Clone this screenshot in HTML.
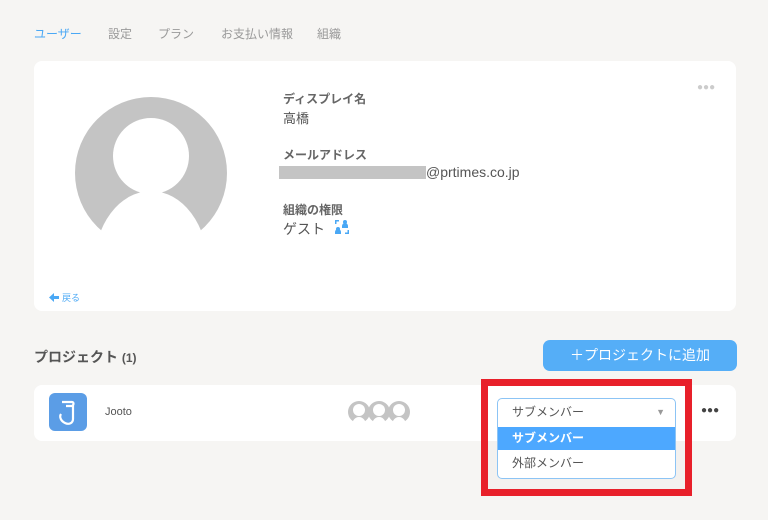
<!DOCTYPE html>
<html><head><meta charset="utf-8"><style>
*{margin:0;padding:0;box-sizing:border-box}
body{width:768px;height:520px;background:#f6f5f3;font-family:"Liberation Sans","Noto Sans CJK JP",sans-serif;position:relative;overflow:hidden;color:#555}
.a{position:absolute;white-space:nowrap}
.tab{top:25px;font-size:12px;color:#999}
.card{position:absolute;background:#fff;border-radius:8px}
.lbl{font-size:12px;font-weight:bold;color:#666}
.val{font-size:13px;color:#555}
</style></head><body>
<div class="a tab" style="left:34px;color:#4aa8f5">ユーザー</div>
<div class="a tab" style="left:108px">設定</div>
<div class="a tab" style="left:158px">プラン</div>
<div class="a tab" style="left:221px">お支払い情報</div>
<div class="a tab" style="left:317px">組織</div>

<div class="card" style="left:34px;top:61px;width:702px;height:250px"></div>
<svg class="a" style="left:70px;top:90px" width="170" height="160">
<circle cx="81" cy="83" r="76" fill="#c4c4c4"/>
<ellipse cx="81" cy="177" rx="57" ry="76" fill="#fff"/>
<circle cx="81" cy="66" r="38" fill="#fff"/>
</svg>
<div class="a" style="left:697px;top:82px;font-size:10px;color:#ccc">●●●</div>
<svg class="a" style="left:48px;top:292px" width="12" height="11"><path d="M1 5.5L6 1v3h5v3H6v3z" fill="#4aa8f5"/></svg>
<div class="a" style="left:62px;top:291px;font-size:9px;color:#4aa8f5">戻る</div>
<div class="a lbl" style="left:283px;top:90px">ディスプレイ名</div>
<div class="a val" style="left:283px;top:108px">高橋</div>
<div class="a lbl" style="left:283px;top:146px">メールアドレス</div>
<div class="a" style="left:279px;top:166px;width:147px;height:13px;background:#c4c4c4"></div>
<div class="a" style="left:426px;top:164px;font-size:14px;color:#555">@prtimes.co.jp</div>
<div class="a lbl" style="left:283px;top:201px">組織の権限</div>
<div class="a" style="left:283px;top:219px;font-size:14px;color:#555">ゲスト</div>
<svg class="a" style="left:334px;top:219px" width="16" height="16"><g fill="#4aa8f5"><circle cx="11" cy="3" r="2"/><path d="M8 9h6v-2a3 3 0 0 0-6 0z"/><circle cx="4" cy="10" r="2"/><path d="M1 15h6v-2a3 3 0 0 0-6 0z"/><path d="M1 1h4v1.5H2.5V5H1z"/><path d="M15 11v4h-4v-1.5h2.5V11z"/></g></svg>

<div class="a" style="left:34px;top:347px;font-size:14px;font-weight:bold;color:#555">プロジェクト <span style="font-size:12px">(1)</span></div>
<div class="a" style="left:543px;top:340px;width:194px;height:31px;background:#55aef7;border-radius:7px;color:#fff;font-size:14px;text-align:center;line-height:31px">＋プロジェクトに追加</div>

<div class="card" style="left:34px;top:385px;width:702px;height:56px"></div>
<svg class="a" style="left:49px;top:393px" width="38" height="38"><rect width="38" height="38" rx="6" fill="#5b9de6"/><path d="M13 9h10c2 0 2 3 0 4h-6M24 12v14c0 4-4 6-8 4-4-2-6-6-4-9" stroke="#fff" stroke-width="2.2" fill="none"/></svg>
<div class="a" style="left:105px;top:406px;font-size:11px;color:#555">Jooto</div>
<svg class="a" style="left:348px;top:401px" width="64" height="22"><g fill="#c4c4c4"><circle cx="11" cy="11" r="11"/><circle cx="31" cy="11" r="11"/><circle cx="51" cy="11" r="11"/></g><g fill="#fff"><circle cx="11" cy="9" r="6"/><circle cx="31" cy="9" r="6"/><circle cx="51" cy="9" r="6"/><ellipse cx="11" cy="24" rx="7" ry="8"/><ellipse cx="31" cy="24" rx="7" ry="8"/><ellipse cx="51" cy="24" rx="7" ry="8"/></g></svg>
<div class="a" style="left:481px;top:379px;width:211px;height:117px;border:7px solid #e8202a;background:#f3f1ef"></div>
<div class="a" style="left:488px;top:386px;width:197px;height:55px;background:#fff"></div>
<div class="a" style="left:701px;top:405px;font-size:10px;color:#444">●●●</div>
<div class="a" style="left:497px;top:398px;width:179px;height:81px;border:1px solid #8cc4f5;border-radius:5px;background:#fff;overflow:hidden">
<div style="height:28px;line-height:27px;padding-left:14px;font-size:12px;color:#555;position:relative">サブメンバー<span style="position:absolute;right:10px;top:0;font-size:9px;color:#999">▼</span></div>
<div style="height:23px;line-height:22px;padding-left:14px;font-size:12px;color:#fff;font-weight:bold;background:#4da8ff">サブメンバー</div>
<div style="height:26px;line-height:26px;padding-left:14px;font-size:12px;color:#555">外部メンバー</div>
</div>
</body></html>
